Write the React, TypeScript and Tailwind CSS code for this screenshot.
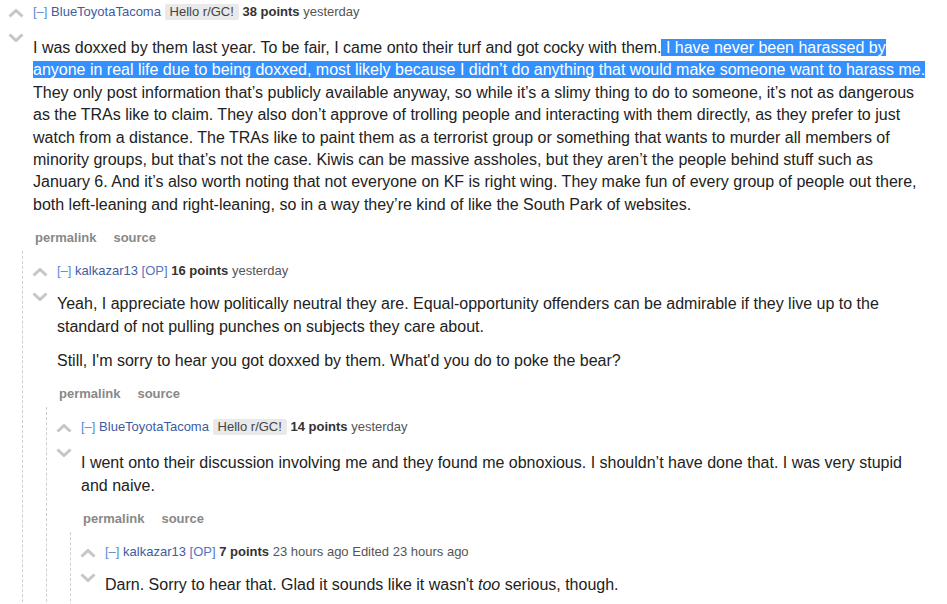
import type { ReactNode } from 'react';

type CommentData = {
  author: string;
  flair?: string;
  op?: boolean;
  points: string;
  time: string;
  edited?: string;
  body: ReactNode;
  child?: CommentData;
};

function Arrow({ down, className }: { down?: boolean; className?: string }) {
  return (
    <svg className={className} width="16" height="9" viewBox="0 0 16 9" fill="none">
      <polyline
        points={down ? '1.5,1.5 8,7.5 14.5,1.5' : '1.5,7.5 8,1.5 14.5,7.5'}
        stroke="#c6c6c6"
        strokeWidth={3}
        strokeLinecap="butt"
        strokeLinejoin="miter"
      />
    </svg>
  );
}

function Comment({ c }: { c: CommentData }) {
  return (
    <div>
      <div className="flex pt-[4px]">
        {/* vote arrows */}
        <div className="w-[33px] shrink-0 pl-[8px] flex flex-col">
          <Arrow className="mt-[5px]" />
          <Arrow down className="mt-[15px]" />
        </div>

        <div className="flex-1 min-w-0">
          <div className="text-[13px] leading-[16px] text-[#555]">
            <span className="text-[#5b8bd0]">[–]</span>{' '}
            <span className="text-[#3d5c9f]">{c.author}</span>{' '}
            {c.op && (
              <>
                <span className="text-[#5574c0]">[OP]</span>{' '}
              </>
            )}
            {c.flair && (
              <>
                <span className="inline-block bg-[#e9e9e9] text-[#444] rounded-[2px] px-[5px] py-[1px] leading-[14px]">
                  {c.flair}
                </span>{' '}
              </>
            )}
            <span className="font-bold text-[#333]">{c.points}</span> {c.time}
            {c.edited && <> Edited {c.edited}</>}
          </div>

          <div
            className={
              c.flair
                ? 'mt-[17px] text-[16px] leading-[22.4px] text-[#222]'
                : 'mt-[14px] text-[16px] leading-[22.4px] text-[#222]'
            }
          >
            {c.body}
          </div>

          <div className="mt-[14px] flex gap-[17px] pl-[2px] text-[13px] leading-[16px] font-bold text-[#888]">
            <span>permalink</span>
            <span>source</span>
          </div>
        </div>
      </div>

      {c.child && (
        <div className="mt-[5px] ml-[22px] border-l border-dashed border-[#cfcfcf] pl-[1px] pt-[8px]">
          <Comment c={c.child} />
        </div>
      )}
    </div>
  );
}

const thread: CommentData = {
  author: 'BlueToyotaTacoma',
  flair: 'Hello r/GC!',
  points: '38 points',
  time: 'yesterday',
  body: (
    <p>
      I was doxxed by them last year. To be fair, I came onto their turf and got cocky with them.
      <span className="bg-[#3390ff] text-white">
        {' '}
        I have never been harassed by anyone in real life due to being doxxed, most likely because I
        didn’t do anything that would make someone want to harass me.
      </span>{' '}
      They only post information that’s publicly available anyway, so while it’s a slimy thing to do
      to someone, it’s not as dangerous as the TRAs like to claim. They also don’t approve of
      trolling people and interacting with them directly, as they prefer to just watch from a
      distance. The TRAs like to paint them as a terrorist group or something that wants to murder
      all members of minority groups, but that’s not the case. Kiwis can be massive assholes, but
      they aren’t the people behind stuff such as January 6. And it’s also worth noting that not
      everyone on KF is right wing. They make fun of every group of people out there, both
      left-leaning and right-leaning, so in a way they’re kind of like the South Park of websites.
    </p>
  ),
  child: {
    author: 'kalkazar13',
    op: true,
    points: '16 points',
    time: 'yesterday',
    body: (
      <>
        <p>
          Yeah, I appreciate how politically neutral they are. Equal-opportunity offenders can be
          admirable if they live up to the standard of not pulling punches on subjects they care
          about.
        </p>
        <p className="mt-[12px]">
          Still, I'm sorry to hear you got doxxed by them. What'd you do to poke the bear?
        </p>
      </>
    ),
    child: {
      author: 'BlueToyotaTacoma',
      flair: 'Hello r/GC!',
      points: '14 points',
      time: 'yesterday',
      body: (
        <p>
          I went onto their discussion involving me and they found me obnoxious. I shouldn’t have
          done that. I was very stupid and naive.
        </p>
      ),
      child: {
        author: 'kalkazar13',
        op: true,
        points: '7 points',
        time: '23 hours ago',
        edited: '23 hours ago',
        body: (
          <p>
            Darn. Sorry to hear that. Glad it sounds like it wasn't <em>too</em> serious, though.
          </p>
        ),
      },
    },
  },
};

export default function App() {
  return (
    <div className="h-[604px] w-[947px] overflow-hidden bg-white pr-[19px] font-['Liberation_Sans',Arial,sans-serif]">
      <Comment c={thread} />
    </div>
  );
}
